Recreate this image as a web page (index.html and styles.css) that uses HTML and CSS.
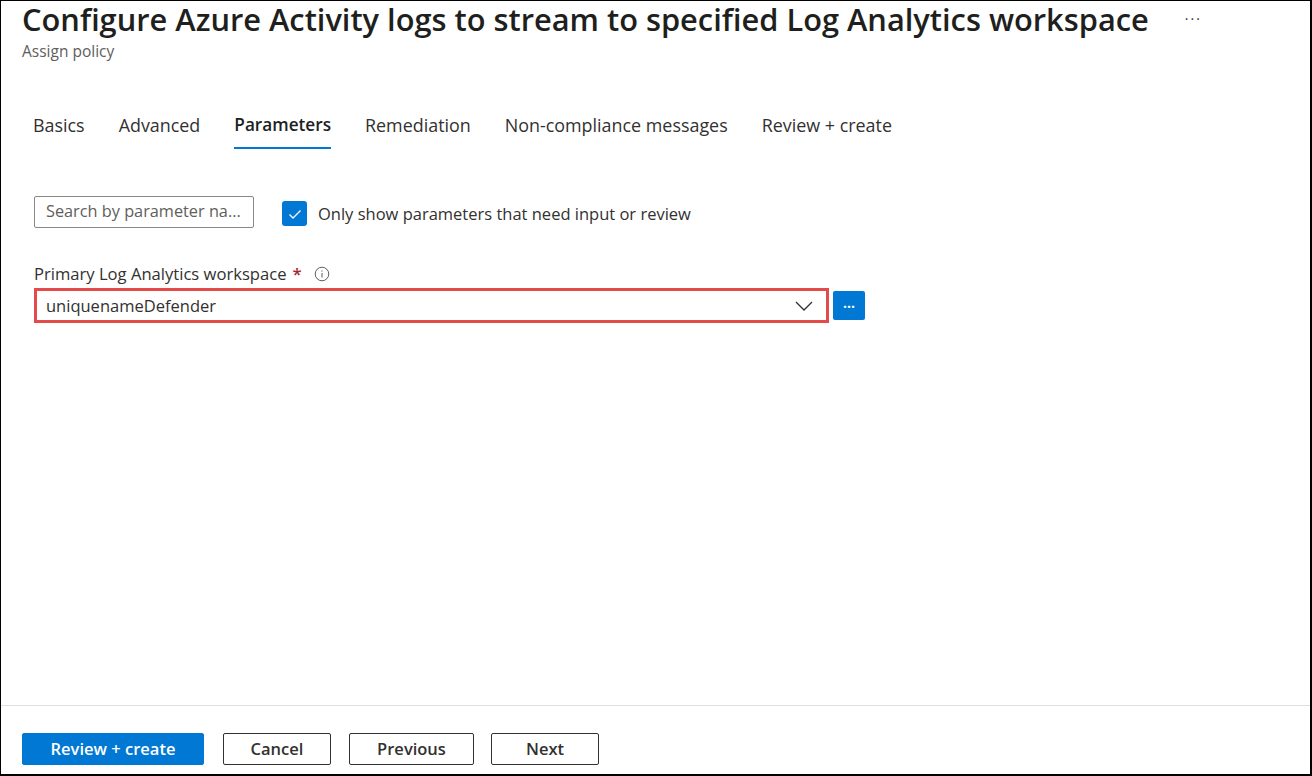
FILE: index.html
```html
<!DOCTYPE html>
<html>
<head>
<meta charset="utf-8">
<link rel="stylesheet" href="styles.css">
</head>
<body>
<div class="frame">
  <div class="header">
    <div class="title-row">
      <h1 class="title">Configure Azure Activity logs to stream to specified Log Analytics workspace</h1>
      <span class="more">···</span>
    </div>
    <div class="subtitle">Assign policy</div>
  </div>
  <div class="tabs">
    <div class="tab">Basics</div>
    <div class="tab">Advanced</div>
    <div class="tab active">Parameters</div>
    <div class="tab">Remediation</div>
    <div class="tab">Non-compliance messages</div>
    <div class="tab">Review + create</div>
  </div>
  <div class="main">
    <div class="filter-row">
      <div class="search">Search by parameter na...</div>
      <label class="check">
        <span class="box"><svg width="16" height="16" viewBox="0 0 16 16"><path d="M2.5 8.5 L6 12 L13.5 4.5" fill="none" stroke="#fff" stroke-width="1.3"/></svg></span>
        <span class="check-label">Only show parameters that need input or review</span>
      </label>
    </div>
    <div class="field">
      <div class="field-label">Primary Log Analytics workspace <span class="req">*</span>
        <svg class="info" width="16" height="16" viewBox="0 0 16 16"><circle cx="8" cy="8" r="6.8" fill="none" stroke="#605e5c" stroke-width="1"/><rect x="7.5" y="7" width="1" height="4.5" fill="#605e5c"/><rect x="7.5" y="4.5" width="1" height="1.2" fill="#605e5c"/></svg>
      </div>
      <div class="field-row">
        <div class="dropdown">
          <span>uniquenameDefender</span>
          <svg width="18" height="10" viewBox="0 0 18 10"><path d="M1 1 L9 9 L17 1" fill="none" stroke="#323130" stroke-width="1.3"/></svg>
        </div>
        <div class="dots-btn">...</div>
      </div>
    </div>
  </div>
  <div class="footer">
    <button class="btn primary">Review + create</button>
    <button class="btn w-cancel">Cancel</button>
    <button class="btn w-prev">Previous</button>
    <button class="btn w-next">Next</button>
  </div>
</div>
</body>
</html>
```

FILE: styles.css
```css
html, body {
  margin: 0;
  padding: 0;
  background: #fff;
}
body {
  font-family: "Open Sans", "Noto Sans", sans-serif;
  color: #323130;
}
.frame {
  width: 1312px;
  height: 776px;
  box-sizing: border-box;
  border-top: 1px solid #000;
  border-left: 1px solid #000;
  border-right: 2px solid #000;
  border-bottom: 2px solid #000;
  display: flex;
  flex-direction: column;
}
.header {
  padding-left: 21px;
}
.title-row {
  display: flex;
  align-items: flex-start;
  height: 38px;
}
.title {
  margin: 0;
  font-size: 30.8px;
  font-weight: 600;
  line-height: 36px;
  color: #201f1e;
  white-space: nowrap;
}
.more {
  margin-left: 36px;
  margin-top: 8px;
  font-size: 14px;
  line-height: 20px;
  letter-spacing: 2px;
  color: #323130;
}
.subtitle {
  font-size: 15.5px;
  line-height: 22px;
  color: #605e5c;
  margin-top: 1px;
}
.tabs {
  display: flex;
  padding-left: 32px;
  margin-top: 49px;
  height: 40px;
}
.tab {
  font-size: 17.9px;
  line-height: 28px;
  margin-right: 34px;
  color: #323130;
  position: relative;
  height: 40px;
  box-sizing: border-box;
}
.tab.active {
  font-weight: 600;
  font-size: 17.2px;
  color: #201f1e;
}
.tab.active::after {
  content: "";
  position: absolute;
  left: 0;
  right: 0;
  top: 36px;
  height: 2px;
  background: #0078d4;
}
.main {
  flex: 1;
  padding-left: 33px;
  padding-top: 44px;
}
.filter-row {
  display: flex;
  align-items: center;
  height: 33px;
}
.search {
  width: 220px;
  height: 32px;
  box-sizing: border-box;
  border: 1px solid #8a8886;
  border-radius: 2px;
  padding-left: 11px;
  font-size: 16.3px;
  line-height: 29px;
  color: #605e5c;
}
.check {
  display: flex;
  align-items: center;
  margin-left: 28px;
  margin-top: 4px;
}
.box {
  width: 25px;
  height: 25px;
  border-radius: 3px;
  background: #0078d4;
  display: flex;
  align-items: center;
  justify-content: center;
}
.check-label {
  margin-left: 11px;
  font-size: 16.5px;
  color: #323130;
}
.field {
  margin-top: 34px;
}
.field-label {
  display: flex;
  align-items: center;
  font-size: 16.6px;
  line-height: 24px;
  color: #323130;
}
.req {
  color: #a4262c;
  margin-left: 6px;
  font-weight: 600;
}
.info {
  margin-left: 12px;
}
.field-row {
  display: flex;
  align-items: center;
  margin-top: 2px;
}
.dropdown {
  width: 795px;
  height: 35px;
  box-sizing: border-box;
  border: 3px solid #e54a4a;
  display: flex;
  align-items: center;
  justify-content: space-between;
  padding: 0 13px 0 9px;
  font-size: 16.5px;
  color: #323130;
}
.dots-btn {
  margin-left: 4px;
  width: 32px;
  height: 29px;
  background: #0078d4;
  border-radius: 2px;
  color: #fff;
  font-weight: 700;
  font-size: 14px;
  line-height: 24px;
  text-align: center;
}
.footer {
  border-top: 1px solid #e1dfdd;
  height: 69px;
  box-sizing: border-box;
  display: flex;
  align-items: flex-start;
  padding-left: 21px;
  padding-top: 27px;
}
.btn {
  font-family: "Open Sans", "Noto Sans", sans-serif;
  font-size: 16.5px;
  font-weight: 600;
  height: 32px;
  border: 1px solid #323130;
  border-radius: 2px;
  background: #fff;
  color: #323130;
  padding: 0;
  line-height: 28px;
}
.btn.primary {
  width: 182px;
  background: #0078d4;
  border-color: #0078d4;
  color: #fff;
  margin-right: 19px;
}
.w-cancel { width: 108px; margin-right: 18px; }
.w-prev { width: 125px; margin-right: 17px; }
.w-next { width: 108px; }
```
